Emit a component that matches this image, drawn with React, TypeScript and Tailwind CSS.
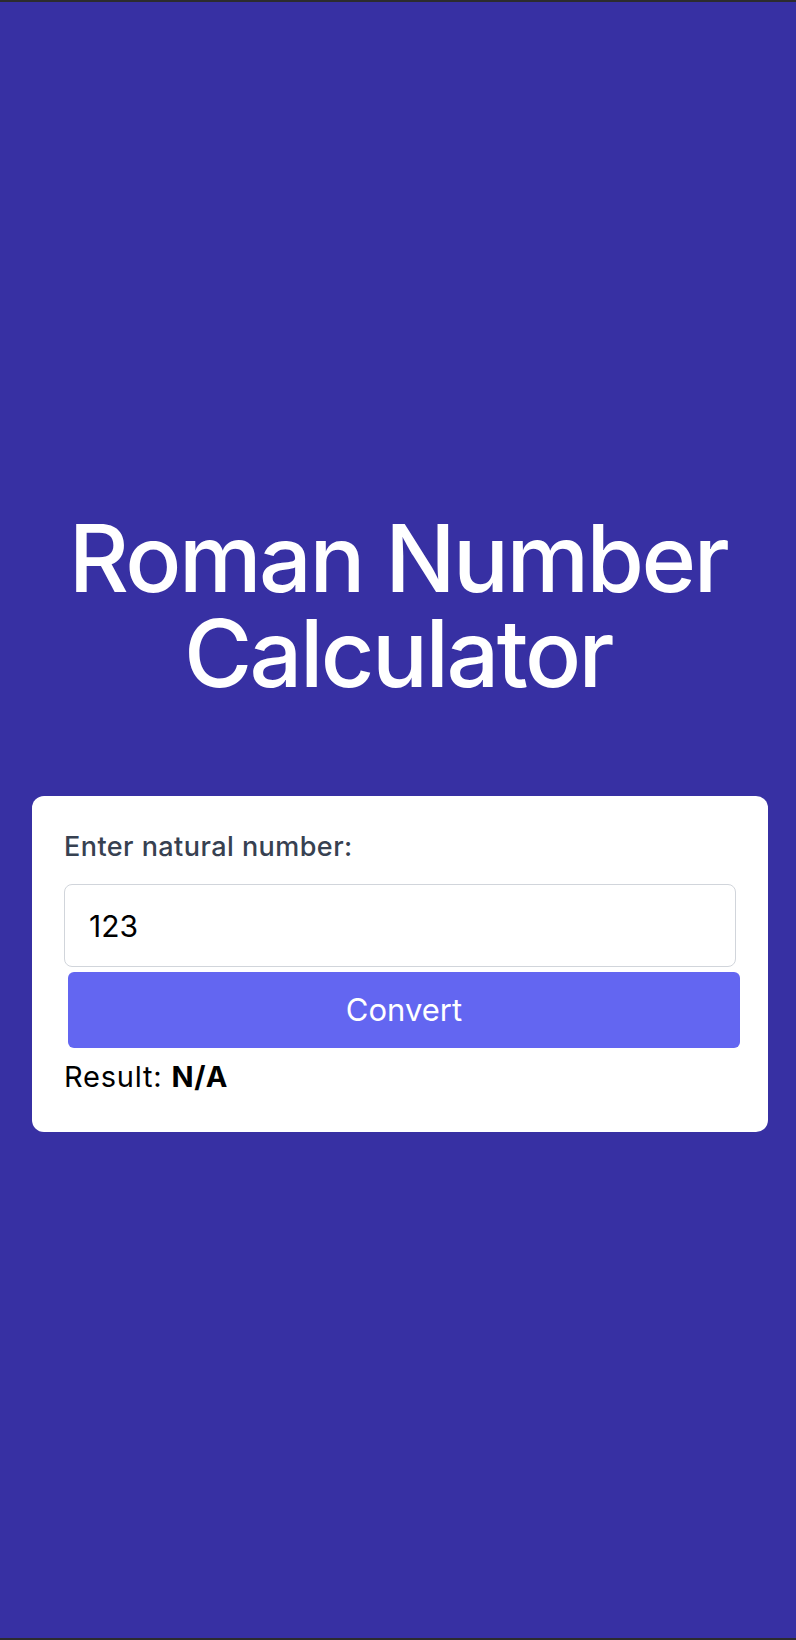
import { useState } from 'react';

function toRoman(n: number): string {
  const map: [number, string][] = [
    [1000, 'M'], [900, 'CM'], [500, 'D'], [400, 'CD'], [100, 'C'], [90, 'XC'],
    [50, 'L'], [40, 'XL'], [10, 'X'], [9, 'IX'], [5, 'V'], [4, 'IV'], [1, 'I'],
  ];
  let out = '';
  for (const [v, s] of map) {
    while (n >= v) {
      out += s;
      n -= v;
    }
  }
  return out;
}

export default function App() {
  const [value, setValue] = useState('123');
  const [result, setResult] = useState('N/A');

  const convert = () => {
    const n = parseInt(value, 10);
    setResult(n > 0 && n < 4000 ? toRoman(n) : 'N/A');
  };

  return (
    <div
      className="min-h-screen h-[1640px] pt-[3px] flex flex-col justify-center bg-[#3730a3] border-y-2 border-[#2c2c2e]"
      style={{ fontFamily: 'Inter, "Liberation Sans", sans-serif' }}
    >
      <h1 className="flex flex-col items-center text-white text-[93px] leading-[95px] font-medium tracking-[-2.5px]">
        <span>Roman Number</span>
        <span>Calculator</span>
      </h1>

      <div className="mt-[95px] ml-8 w-[736px] rounded-xl bg-white p-8 pb-9">
        <label className="block text-[27px] leading-[38px] font-medium text-[#374151] tracking-[0.45px] mb-[18px]">
          Enter natural number:
        </label>
        <input
          type="text"
          value={value}
          onChange={(e) => setValue(e.target.value)}
          className="block w-full h-[83px] rounded-lg border-[1.5px] border-[#d1d5db] px-6 text-[30px] text-black outline-none"
        />
        {/* button sits a few px off the input, as in the original */}
        <button
          onClick={convert}
          className="block mt-[5px] ml-1 w-full h-[76px] rounded-md bg-[#6366f1] text-white text-[31px]"
        >
          Convert
        </button>
        <p className="mt-[10px] text-[29px] leading-[38px] tracking-[0.8px] text-black">
          Result: <span className="font-bold">{result}</span>
        </p>
      </div>
    </div>
  );
}
